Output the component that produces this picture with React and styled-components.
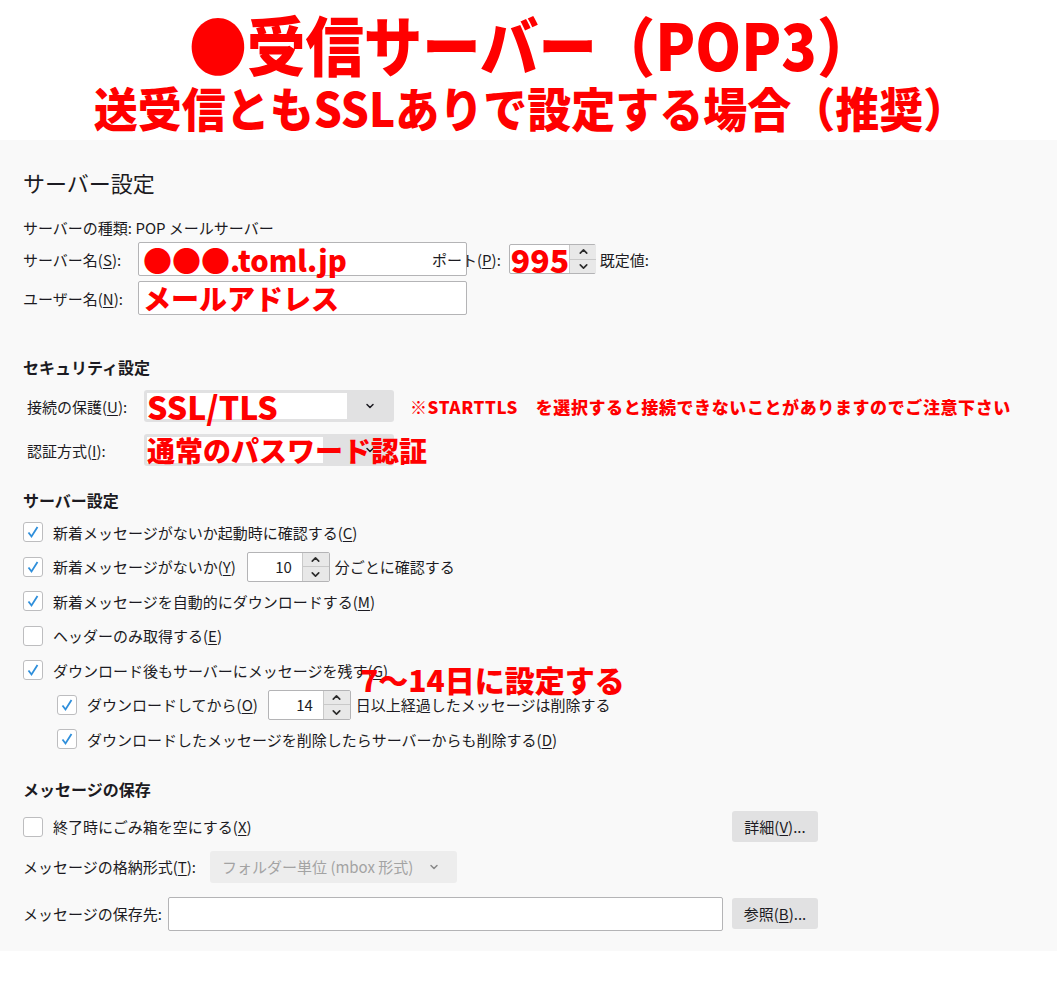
import React from 'react';
import styled, { createGlobalStyle } from 'styled-components';
import { ChevronUp, ChevronDown } from 'lucide-react';

const GlobalStyle = createGlobalStyle`
  body {
    margin: 0;
    background: #ffffff;
    font-family: "Noto Sans CJK JP", "Noto Sans", sans-serif;
    color: #1c1b22;
  }
`;

const Header = styled.header`
  height: 140px;
  display: flex;
  flex-direction: column;
  align-items: center;
  color: #ff0000;
`;

const MainTitle = styled.h1`
  margin: 7px 0 0 7px;
  font-size: 58.4px;
  line-height: 72px;
  font-weight: 900;
  white-space: nowrap;
  transform: scaleY(1.1);
`;

const SubTitle = styled.h2`
  margin: 0 0 0 4px;
  font-size: 44px;
  line-height: 56px;
  font-weight: 900;
  white-space: nowrap;
  transform: scaleY(1.06);
`;

const Panel = styled.section`
  background: #f9f9f9;
  padding: 30px 23px 20px;
  font-size: 15px;
`;

const PageTitle = styled.div`
  height: 24px;
  line-height: 24px;
  font-size: 22px;
`;

const Heading = styled.div`
  height: 20px;
  line-height: 20px;
  font-size: 16px;
  font-weight: 700;
  margin-top: ${p => p.mt}px;
`;

const Row = styled.div`
  position: relative;
  display: flex;
  align-items: center;
  height: ${p => p.h}px;
  margin-top: ${p => p.mt || 0}px;
  padding-left: ${p => p.indent || 0}px;
  width: ${p => (p.w ? `${p.w}px` : 'auto')};
  white-space: nowrap;
`;

const Label = styled.span`
  flex: none;
  width: ${p => (p.w ? `${p.w}px` : 'auto')};
  margin-left: ${p => p.ml || 0}px;
  margin-right: ${p => p.mr || 0}px;
`;

const Ak = styled.span`
  text-decoration: underline;
  text-underline-offset: 2px;
`;

const TextBox = styled.div`
  flex: ${p => (p.grow ? 1 : 'none')};
  box-sizing: border-box;
  display: flex;
  align-items: center;
  width: ${p => (p.w ? `${p.w}px` : 'auto')};
  height: ${p => p.h}px;
  padding-left: 4px;
  background: #ffffff;
  border: 1px solid #b4b4b6;
  border-radius: 2px;
`;

const Patch = styled.span`
  display: flex;
  align-items: center;
  width: ${p => p.w}px;
  height: ${p => p.h}px;
  background: #ffffff;
  overflow: visible;
`;

const Red = styled.span`
  position: relative;
  color: #ff0000;
  font-weight: 900;
  font-size: ${p => p.size}px;
  line-height: 1;
  white-space: nowrap;
`;

const Select = styled.div`
  flex: none;
  position: relative;
  box-sizing: border-box;
  display: flex;
  align-items: center;
  width: ${p => p.w}px;
  height: 32px;
  padding: 0 ${p => (p.pad ? 12 : 3)}px;
  background: ${p => (p.disabled ? '#ededed' : '#e1e1e2')};
  color: ${p => (p.disabled ? '#a3a3a3' : '#1c1b22')};
  border-radius: 3px;
  overflow: visible;
`;

const Caret = styled.span`
  position: absolute;
  left: ${p => p.left}px;
  top: 10px;
  display: flex;
  color: ${p => p.color || '#1c1b22'};
`;

const Spin = styled.div`
  flex: none;
  box-sizing: border-box;
  display: flex;
  width: ${p => p.w}px;
  height: 30px;
  margin: 0 ${p => p.mr || 5}px 0 ${p => p.ml || 7}px;
  background: #ffffff;
  border: 1px solid #b4b4b6;
  border-radius: 2px;
`;

const SpinValue = styled.div`
  flex: 1;
  display: flex;
  align-items: center;
  justify-content: ${p => (p.left ? 'flex-start' : 'flex-end')};
  padding: 0 ${p => (p.left ? 0 : 10)}px 0 ${p => (p.left ? 1 : 0)}px;
`;

const SpinButtons = styled.div`
  flex: none;
  width: 26px;
  display: flex;
  flex-direction: column;
  border-left: 1px solid #c9c9c9;
`;

const SpinButton = styled.div`
  flex: 1;
  display: flex;
  align-items: center;
  justify-content: center;
  background: #e8e8e8;
  color: #2b2b2b;
  & + & {
    border-top: 1px solid #c9c9c9;
  }
`;

const Box = styled.span`
  flex: none;
  box-sizing: border-box;
  display: flex;
  align-items: center;
  justify-content: center;
  width: 20px;
  height: 20px;
  margin-right: 10px;
  background: #ffffff;
  border: 1px solid #bdbdbf;
  border-radius: 3px;
`;

const Button = styled.div`
  flex: none;
  display: flex;
  align-items: center;
  justify-content: center;
  width: 86px;
  height: 31px;
  margin-left: ${p => p.ml || 'auto'};
  background: #e1e1e2;
  border-radius: 3px;
`;

const Note = styled.span`
  margin-left: 16px;
  color: #ff0000;
  font-weight: 900;
  font-size: 17px;
  letter-spacing: 0.6px;
`;

const Annotation = styled.span`
  position: absolute;
  left: 337px;
  top: 10px;
  color: #ff0000;
  font-weight: 900;
  font-size: 30px;
  line-height: 32px;
`;

const Check = ({ on }) => (
  <Box>
    {on && (
      <svg width="14" height="14" viewBox="0 0 14 14">
        <polyline points="2.5,7.5 5.5,11.5 11.5,2" fill="none" stroke="#2f8fdb" strokeWidth="1.8" />
      </svg>
    )}
  </Box>
);

const Spinner = ({ w, children, left, ml, mr }) => (
  <Spin w={w} ml={ml} mr={mr}>
    <SpinValue left={left}>{children}</SpinValue>
    <SpinButtons>
      <SpinButton><ChevronUp size={13} strokeWidth={3} /></SpinButton>
      <SpinButton><ChevronDown size={13} strokeWidth={3} /></SpinButton>
    </SpinButtons>
  </Spin>
);

const CheckRow = ({ on, indent, children }) => (
  <Row h={34.5} indent={indent}>
    <Check on={on} />
    {children}
  </Row>
);

export default function App() {
  return (
    <>
      <GlobalStyle />
      <Header>
        <MainTitle>●受信サーバー（POP3）</MainTitle>
        <SubTitle>送受信ともSSLありで設定する場合（推奨）</SubTitle>
      </Header>
      <Panel>
        <PageTitle>サーバー設定</PageTitle>
        <Row h={20} mt={23}>サーバーの種類: POP メールサーバー</Row>
        <Row h={34} mt={5}>
          <Label w={115}>サーバー名(<Ak>S</Ak>):</Label>
          <TextBox w={329} h={34}>
            <Patch w={277} h={26}><Red size={29}>●●●.toml.jp</Red></Patch>
          </TextBox>
          <Label ml={-35}>ポート(<Ak>P</Ak>):</Label>
          <Spinner w={87} left ml={8} mr={4}><Red size={32}>995</Red></Spinner>
          <Label>既定値:</Label>
        </Row>
        <Row h={34} mt={5}>
          <Label w={115}>ユーザー名(<Ak>N</Ak>):</Label>
          <TextBox w={329} h={34}>
            <Patch w={277} h={26}><Red size={28}>メールアドレス</Red></Patch>
          </TextBox>
        </Row>

        <Heading mt={42}>セキュリティ設定</Heading>
        <Row h={32} mt={13} indent={4}>
          <Label w={117}>接続の保護(<Ak>U</Ak>):</Label>
          <Select w={250}>
            <Patch w={200} h={26}><Red size={32}>SSL/TLS</Red></Patch>
            <Caret left={220}><ChevronDown size={12} strokeWidth={3} /></Caret>
          </Select>
          <Note>※STARTTLS　を選択すると接続できないことがありますのでご注意下さい</Note>
        </Row>
        <Row h={32} mt={12} indent={4}>
          <Label w={117}>認証方式(<Ak>I</Ak>):</Label>
          <Select w={250}>
            <Caret left={220}><ChevronDown size={12} strokeWidth={3} /></Caret>
            <Patch w={176} h={26}><Red size={28}>通常のパスワード認証</Red></Patch>
          </Select>
        </Row>

        <Heading mt={24}>サーバー設定</Heading>
        <div style={{ marginTop: 5 }}>
          <CheckRow on>新着メッセージがないか起動時に確認する(<Ak>C</Ak>)</CheckRow>
          <CheckRow on>
            新着メッセージがないか(<Ak>Y</Ak>)
            <Spinner w={83} ml={11}>10</Spinner>
            分ごとに確認する
          </CheckRow>
          <CheckRow on>新着メッセージを自動的にダウンロードする(<Ak>M</Ak>)</CheckRow>
          <CheckRow>ヘッダーのみ取得する(<Ak>E</Ak>)</CheckRow>
          <CheckRow on>
            ダウンロード後もサーバーにメッセージを残す(<Ak>G</Ak>)
            <Annotation>7～14日に設定する</Annotation>
          </CheckRow>
          <CheckRow on indent={34}>
            ダウンロードしてから(<Ak>O</Ak>)
            <Spinner w={83} ml={10}>14</Spinner>
            日以上経過したメッセージは削除する
          </CheckRow>
          <CheckRow on indent={34}>ダウンロードしたメッセージを削除したらサーバーからも削除する(<Ak>D</Ak>)</CheckRow>
        </div>

        <Heading mt={22}>メッセージの保存</Heading>
        <Row h={32} mt={12} w={795}>
          <Check />
          終了時にごみ箱を空にする(<Ak>X</Ak>)
          <Button>詳細(<Ak>V</Ak>)...</Button>
        </Row>
        <Row h={32} mt={8}>
          <Label mr={14}>メッセージの格納形式(<Ak>T</Ak>):</Label>
          <Select w={247} pad disabled>
            フォルダー単位 (mbox 形式)
            <Caret left={218} color="#8a8a8a"><ChevronDown size={12} strokeWidth={3} /></Caret>
          </Select>
        </Row>
        <Row h={34} mt={14} w={795}>
          <Label mr={6}>メッセージの保存先:</Label>
          <TextBox grow h={34} />
          <Button ml="9px">参照(<Ak>B</Ak>)...</Button>
        </Row>
      </Panel>
    </>
  );
}
